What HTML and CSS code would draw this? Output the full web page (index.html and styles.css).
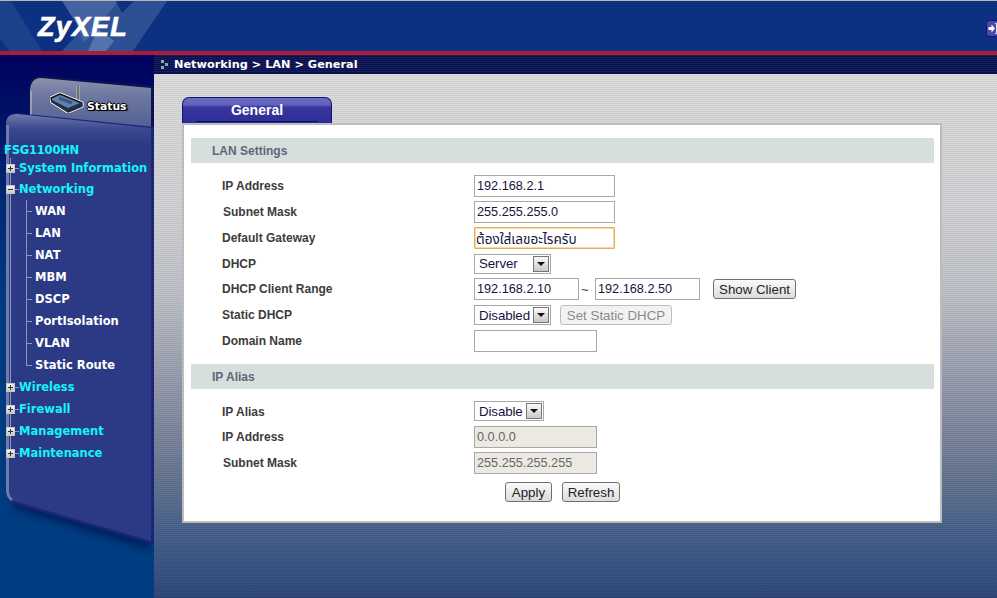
FILE: index.html
```html
<!DOCTYPE html>
<html lang="en">
<head>
<meta charset="utf-8">
<title>ZyXEL FSG1100HN - Networking LAN General</title>
<link rel="stylesheet" href="styles.css">
</head>
<body>
<div class="page">
  <header class="header">
    <svg class="logo-art" width="200" height="50" viewBox="0 0 200 50" aria-hidden="true">
      <polygon points="0,0 11,0 42,50 10,50 0,38" fill="#1b4189"/>
      <polygon points="118,0 167,0 133,50 62,50 90,20" fill="#2d5095"/>
      <polygon points="62,0 118,0 112,8 84,42 76,22" fill="#4563a2"/>
      <polygon points="98,28 114,40 106,50 88,50" fill="#5573ad"/>
      <polygon points="116,0 134,0 122,12" fill="#0c3180"/>
    </svg>
    <div class="logo">ZyXEL</div>
    <a class="logout" href="#" aria-label="Logout">
      <svg width="15" height="17" viewBox="0 0 15 17">
        <rect x=".5" y=".5" width="14" height="16" rx="3" fill="#4a48b0" stroke="#14146a"/>
        <path d="M2.500 7h3V4.500L9 8.500l-3.500 4V10h-3z" fill="#fff"/>
        <path d="M9 3.500h1.500v10H9" fill="none" stroke="#dfe2ff"/>
      </svg>
    </a>
  </header>
  <div class="red-rule"></div>
  <div class="body">
    <aside class="sidebar">
      <svg class="sidebar-art" width="154" height="543" viewBox="0 0 154 543" aria-hidden="true">
        <defs>
          <linearGradient id="tabfill" x1="0" y1="0" x2="0" y2="1">
            <stop offset="0" stop-color="#8b92ac"/>
            <stop offset=".3" stop-color="#6d78a0"/>
            <stop offset="1" stop-color="#4b5890"/>
          </linearGradient>
          <linearGradient id="panelfill" x1="0" y1="0" x2="0" y2="1">
            <stop offset="0" stop-color="#6f7ba8"/>
            <stop offset=".035" stop-color="#3b4890"/>
            <stop offset=".07" stop-color="#2c3a85"/>
            <stop offset="1" stop-color="#2c3a85"/>
          </linearGradient>
          <filter id="soft" x="-10%" y="-50%" width="120%" height="200%">
            <feGaussianBlur stdDeviation="3"/>
          </filter>
        </defs>
        <path d="M14 449 L150 491" stroke="#00245f" stroke-width="9" filter="url(#soft)"/>
        <path d="M29 34 Q30 21 41 21 L154 31 V80 H29 Z" fill="#0c1450"/>
        <path d="M30 35 Q31 23 41 23 L151 33 V82 H30 Z" fill="url(#tabfill)"/>
        <path d="M31 36 V70" stroke="#a8aec4" stroke-width="1.500" fill="none"/>
        <path d="M6 68 Q6 58 17 58 L154 72 V489 L14 449 Q6 446 6 436 Z" fill="#1c2478"/>
        <path d="M6 69 Q6 59 17 59 L151 73 V486 L14 446 Q6 444 6 436 Z" fill="url(#panelfill)"/>
        <path d="M7.500 70 V436 Q8 442 12 445" fill="none" stroke="#6f7ba8" stroke-width="3"/>
      </svg>
      <div class="status-tab">
        <svg class="router" width="34" height="27" viewBox="0 0 34 27" aria-hidden="true">
          <path d="M28 0 V16" stroke="#fff" stroke-width="2.600"/>
          <path d="M28 0 V16" stroke="#111" stroke-width="1.200"/>
          <polygon points="1,12 10,8 32,17 32,20 18,26 2,16" fill="#fff" stroke="#fff" stroke-width="3.200" stroke-linejoin="round"/>
          <polygon points="1,12 10,8 32,17 32,20 18,26 2,16" fill="#5f82ac" stroke="#111" stroke-width="1.400" stroke-linejoin="round"/>
          <polygon points="2,14 18,22 32,16 32,20 18,26 2,16" fill="#22304a"/>
          <path d="M9 12 L22 17" stroke="#3f5680" stroke-width="3"/>
        </svg>
        <span class="status-label">Status</span>
      </div>
      <nav class="nav">
        <div class="device">FSG1100HN</div>
        <ul class="tree">
          <li class="tree-item tree-item--first"><span class="toggle toggle--plus"></span><a href="#">System Information</a></li>
          <li class="tree-item"><span class="toggle"></span><a href="#">Networking</a></li>
          <li>
            <ul class="subtree">
              <li class="sub-item"><a href="#">WAN</a></li>
              <li class="sub-item"><a href="#">LAN</a></li>
              <li class="sub-item"><a href="#">NAT</a></li>
              <li class="sub-item"><a href="#">MBM</a></li>
              <li class="sub-item"><a href="#">DSCP</a></li>
              <li class="sub-item"><a href="#">PortIsolation</a></li>
              <li class="sub-item"><a href="#">VLAN</a></li>
              <li class="sub-item"><a href="#">Static Route</a></li>
            </ul>
          </li>
          <li class="tree-item"><span class="toggle toggle--plus"></span><a href="#">Wireless</a></li>
          <li class="tree-item"><span class="toggle toggle--plus"></span><a href="#">Firewall</a></li>
          <li class="tree-item"><span class="toggle toggle--plus"></span><a href="#">Management</a></li>
          <li class="tree-item"><span class="toggle toggle--plus"></span><a href="#">Maintenance</a></li>
        </ul>
      </nav>
    </aside>
    <main class="main">
      <div class="crumb">
        <span class="crumb-icon"><i></i><i></i><i></i></span>
        <span>Networking &gt; LAN &gt; General</span>
      </div>
      <div class="content">
        <div class="tab">General</div>
        <form class="card">
          <h2 class="bar">LAN Settings</h2>
          <div class="rows">
            <div class="row"><label class="label">IP Address</label><input class="input input--wide" value="192.168.2.1"></div>
            <div class="row"><label class="label label--in">Subnet Mask</label><input class="input input--wide" value="255.255.255.0"></div>
            <div class="row"><label class="label">Default Gateway</label><input class="input input--wide input--focus" value="ต้องใส่เลขอะไรครับ"></div>
            <div class="row row--tight"><label class="label">DHCP</label><div class="select select--server"><span>Server</span><i class="arrow"></i></div></div>
            <div class="row"><label class="label">DHCP Client Range</label>
              <div class="field-group">
                <input class="input input--range" value="192.168.2.10"><span class="tilde">~</span><input class="input input--range" value="192.168.2.50"><button type="button" class="btn btn--show">Show Client</button>
              </div>
            </div>
            <div class="row"><label class="label">Static DHCP</label>
              <div class="field-group">
                <div class="select select--server"><span>Disabled</span><i class="arrow"></i></div><button type="button" class="btn btn--static" disabled>Set Static DHCP</button>
              </div>
            </div>
            <div class="row"><label class="label">Domain Name</label><input class="input input--mid" value=""></div>
          </div>
          <h2 class="bar bar--second">IP Alias</h2>
          <div class="rows rows--second">
            <div class="row"><label class="label label--low">IP Alias</label><div class="select select--alias"><span>Disable</span><i class="arrow"></i></div></div>
            <div class="row"><label class="label">IP Address</label><input class="input input--mid input--off" value="0.0.0.0" disabled></div>
            <div class="row"><label class="label label--in">Subnet Mask</label><input class="input input--mid input--off" value="255.255.255.255" disabled></div>
          </div>
          <div class="actions">
            <button type="button" class="btn btn--apply">Apply</button>
            <button type="button" class="btn btn--refresh">Refresh</button>
          </div>
        </form>
      </div>
    </main>
  </div>
</div>
</body>
</html>
```
FILE: styles.css
```css
* { box-sizing: border-box; }
html, body { margin: 0; padding: 0; height: 100%; overflow: hidden; }
body { font-family: "Liberation Sans", Arial, sans-serif; }
ul { list-style: none; margin: 0; padding: 0; }

.page { width: 997px; height: 598px; display: flex; flex-direction: column; overflow: hidden; }

.header {
  position: relative;
  flex: 0 0 51px;
  display: flex;
  align-items: center;
  justify-content: space-between;
  background: #0c3180;
  border-top: 1px solid #b8b8b0;
  overflow: hidden;
}
.logo-art { position: absolute; left: 0; top: 0; }
.logo {
  position: relative;
  margin: 1px 0 0 38px;
  font: italic bold 27px "Liberation Sans", Arial, sans-serif;
  -webkit-text-stroke: .7px #fff;
  letter-spacing: 1.200px;
  color: #fff;
  line-height: 30px;
}
.logout { display: block; margin-right: -4px; margin-top: 5px; height: 17px; line-height: 0; }

.red-rule { flex: 0 0 4px; background: #ab1c38; }

.body { flex: 1; display: flex; min-height: 0; }

.sidebar {
  position: relative;
  flex: 0 0 154px;
  background: linear-gradient(#00005e 0, #00246e 120px, #003a80 240px, #003c80 100%);
}
.sidebar-art { position: absolute; left: 0; top: 0; }

.status-tab {
  position: relative;
  height: 82px;
  padding: 31px 0 0 50px;
  display: flex;
  align-items: flex-start;
}
.router { flex: none; }
.status-label {
  margin: 14px 0 0 3px;
  font: bold 10.800px "DejaVu Sans", sans-serif;
  color: #fff;
  text-shadow: 1px 0 0 #000, -1px 0 0 #000, 0 1px 0 #000, 0 -1px 0 #000, 1px 1px 0 #000, 2px 1px 1px #111;
}

.nav { position: relative; padding-top: 5px; font: bold 11.500px/22px "DejaVu Sans", sans-serif; }
.nav a { color: inherit; text-decoration: none; white-space: nowrap; }
.device { color: #14f4ff; height: 16px; line-height: 16px; padding-left: 4px; letter-spacing: -.2px; }

.tree {
  color: #14f4ff;
  background: linear-gradient(#8f95bd, #8f95bd) no-repeat 10px 0 / 1px calc(100% - 11px);
}
.tree-item {
  height: 22px;
  display: flex;
  align-items: center;
  padding-left: 6px;
  background: linear-gradient(#8f95bd, #8f95bd) no-repeat 15px 50% / 4px 1px;
}
.tree-item--first { height: 20px; }
.tree-item a { margin-left: 4px; }
.toggle {
  flex: none;
  width: 9px;
  height: 9px;
  border: 1px solid #c6c6c6;
  background:
    linear-gradient(#333, #333) no-repeat center / 5px 1px,
    linear-gradient(#f6f6f6, #c8c8c8);
}
.toggle--plus {
  background:
    linear-gradient(#333, #333) no-repeat center / 5px 1px,
    linear-gradient(#333, #333) no-repeat center / 1px 5px,
    linear-gradient(#f6f6f6, #c8c8c8);
}

.subtree {
  color: #fff;
  margin-left: 26px;
  background: linear-gradient(#8f95bd, #8f95bd) no-repeat 0 0 / 1px calc(100% - 11px);
}
.sub-item {
  height: 22px;
  display: flex;
  align-items: center;
  padding-left: 9px;
  background: linear-gradient(#8f95bd, #8f95bd) no-repeat 0 50% / 6px 1px;
}

.main {
  flex: 1;
  min-width: 0;
  display: flex;
  flex-direction: column;
  background:
    repeating-linear-gradient(rgba(0,0,0,.05) 0 1px, rgba(255,255,255,.03) 1px 2px),
    linear-gradient(#dcdcdc 0, #d2d2d6 150px, #bcc0c6 240px, #8e94a8 340px, #64748f 420px, #3f5a88 490px, #2d4677 100%);
}
.crumb {
  flex: 0 0 19px;
  display: flex;
  align-items: center;
  gap: 6px;
  padding: 1px 0 0 7px;
  background: repeating-linear-gradient(#15205e 0 1px, #0a0f4c 1px 2px);
  font: bold 11.300px "DejaVu Sans", sans-serif;
  color: #fff;
  border-bottom: 1px solid #0a0f4c;
}
.crumb-icon { position: relative; width: 7px; height: 9px; display: block; }
.crumb-icon i { position: absolute; width: 3px; height: 3px; background: #9aa0b4; }
.crumb-icon i:nth-child(1) { left: 0; top: 0; }
.crumb-icon i:nth-child(2) { left: 4px; top: 3px; }
.crumb-icon i:nth-child(3) { left: 0; top: 6px; }

.content { padding: 23px 0 0 28px; }

.tab {
  position: relative;
  width: 150px;
  height: 27px;
  margin-bottom: -1px;
  border: 1px solid #12126e;
  border-bottom: 0;
  border-radius: 7px 7px 0 0;
  background: linear-gradient(#6a6cc4 0, #5e60ba 7px, #36369e 9px, #2e2e96 100%);
  color: #fff;
  font: bold 14px/25px "Liberation Sans", Arial, sans-serif;
  text-align: center;
}
.tab::after {
  content: "";
  position: absolute;
  left: 13px;
  right: 13px;
  bottom: 2px;
  height: 1px;
  background: #0c0c64;
}

.card {
  position: relative;
  width: 760px;
  height: 400px;
  background: #fff;
  border: 2px solid #bcbcbc;
  padding: 13px 6px 0 7px;
  color: #3c3c3c;
}
.bar {
  margin: 0;
  height: 25px;
  padding: 1px 0 0 21px;
  background: #d7dfdd;
  color: #60667a;
  font: bold 12px/25px "Liberation Sans", Arial, sans-serif;
}
.bar--second { margin-top: 10px; }
.rows { padding: 10px 0 0 31px; }
.rows--second { padding-top: 9px; }
.row { display: flex; align-items: center; height: 26px; }
.row--tight { height: 25px; }
.label { flex: 0 0 252px; font: bold 12px "Liberation Sans", Arial, sans-serif; color: #3c3c3c; }
.label--in { padding-left: 1px; }
.label--low { padding-top: 2px; }

.input {
  height: 22px;
  padding: 1px 2px;
  border: 1px solid #a8a8a8;
  background: #fff;
  color: #14143c;
  font: 12.700px "Liberation Sans", Arial, "Noto Sans Thai", "Noto Sans", sans-serif;
  outline: none;
}
.input--wide { width: 141px; }
.input--mid { width: 123px; }
.input--range { width: 105px; }
.input--focus {
  padding: 3px 0 0 1px;
  font-size: 13.600px;
  border-color: #e5ac55;
  box-shadow: 0 0 0 1px #f3d9a8 inset;
  border-radius: 1px;
}
.input--off { background: #ebe9e2; color: #666; }

.field-group { display: flex; align-items: center; }
.tilde { width: 16px; padding-left: 2px; font-size: 13px; color: #333; }

.select {
  height: 20px;
  display: flex;
  align-items: center;
  justify-content: space-between;
  padding: 0 1px 0 4px;
  border: 1px solid #a8a8a8;
  background: #fff;
  color: #14143c;
  font-size: 13.300px;
  letter-spacing: -.1px;
}
.select--server { width: 77px; }
.select--alias { width: 70px; }
.arrow {
  position: relative;
  flex: none;
  width: 16px;
  height: 16px;
  border: 1px solid #777;
  background: linear-gradient(#fafafa, #c8c8c8);
}
.arrow::after {
  content: "";
  position: absolute;
  left: 3px;
  top: 5px;
  border: 4px solid transparent;
  border-top: 4px solid #111;
  border-bottom: 0;
}

.btn {
  height: 20px;
  padding: 0;
  border: 1px solid #707070;
  border-radius: 3px;
  background: linear-gradient(#fafafa, #dcdcdc);
  color: #222;
  font: 13.300px "Liberation Sans", Arial, sans-serif;
}
.btn--show { width: 83px; margin-left: 13px; }
.btn--static { width: 112px; margin-left: 9px; border-color: #bdbdbd; color: #8a8a8a; background: #f2f2f2; }
.btn--apply { width: 47px; }
.btn--refresh { width: 58px; }

.actions { display: flex; gap: 10px; padding: 3px 0 0 314px; align-items: center; height: 29px; }
```
